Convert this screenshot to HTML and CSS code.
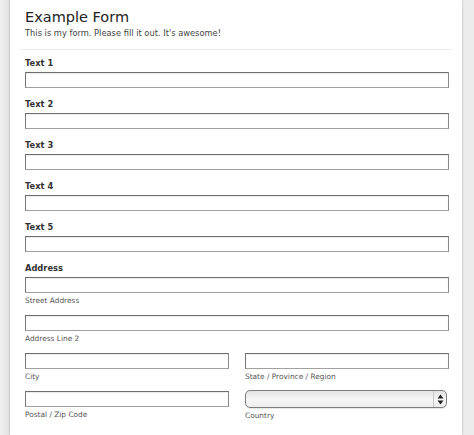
FILE: index.html
```html
<!DOCTYPE html>
<html lang="en">
<head>
<meta charset="utf-8">
<title>Example Form</title>
<link rel="stylesheet" href="styles.css">
</head>
<body>
<div class="page">
  <header class="form-header">
    <h1 class="form-title">Example Form</h1>
    <p class="form-desc">This is my form. Please fill it out. It's awesome!</p>
  </header>
  <form class="form-body">
    <div class="field">
      <label class="field-label">Text 1</label>
      <input class="text-input" type="text">
    </div>
    <div class="field">
      <label class="field-label">Text 2</label>
      <input class="text-input" type="text">
    </div>
    <div class="field">
      <label class="field-label">Text 3</label>
      <input class="text-input" type="text">
    </div>
    <div class="field">
      <label class="field-label">Text 4</label>
      <input class="text-input" type="text">
    </div>
    <div class="field">
      <label class="field-label">Text 5</label>
      <input class="text-input" type="text">
    </div>
    <div class="field address">
      <label class="field-label">Address</label>
      <div class="sub">
        <input class="text-input" type="text">
        <span class="sub-label">Street Address</span>
      </div>
      <div class="sub">
        <input class="text-input" type="text">
        <span class="sub-label">Address Line 2</span>
      </div>
      <div class="sub-row">
        <div class="sub">
          <input class="text-input" type="text">
          <span class="sub-label">City</span>
        </div>
        <div class="sub">
          <input class="text-input" type="text">
          <span class="sub-label">State / Province / Region</span>
        </div>
      </div>
      <div class="sub-row last">
        <div class="sub">
          <input class="text-input" type="text">
          <span class="sub-label">Postal / Zip Code</span>
        </div>
        <div class="sub">
          <div class="select-box">
            <span class="select-value"></span>
            <span class="select-arrows">
              <svg width="7" height="11" viewBox="0 0 7 11"><path d="M3.5 0.5 L6.5 4.5 L0.5 4.5 Z" fill="#222"/><path d="M3.5 10.5 L6.5 6.5 L0.5 6.5 Z" fill="#222"/></svg>
            </span>
          </div>
          <span class="sub-label">Country</span>
        </div>
      </div>
    </div>
  </form>
</div>
</body>
</html>
```

FILE: styles.css
```css
html, body {
  margin: 0;
  padding: 0;
  height: 100%;
}
body {
  background: linear-gradient(to right, #f0f0f0 0, #e4e4e4 9px, #ececec 100%);
  font-family: "DejaVu Sans", Verdana, sans-serif;
  color: #222;
}
.page {
  margin-left: 10px;
  width: 452px;
  height: 100%;
  background: #fff;
  box-shadow: 0 0 2px rgba(0, 0, 0, 0.3);
  box-sizing: border-box;
  overflow: hidden;
}
.form-header {
  margin: 0 10px;
  padding: 8px 0 10px 5px;
  border-bottom: 1px solid #ececec;
}
.form-title {
  margin: 0;
  font-size: 14.5px;
  line-height: 18px;
  font-weight: normal;
  color: #222;
}
.form-desc {
  margin: 2px 0 0;
  font-size: 8.3px;
  line-height: 11px;
  color: #444;
}
.form-body {
  margin: 0;
  padding: 8px 13px 0 15px;
}
.field {
  display: flex;
  flex-direction: column;
  margin-bottom: 11px;
}
.field.address {
  margin-bottom: 0;
}
.field-label {
  font-size: 8.3px;
  line-height: 11px;
  font-weight: bold;
  color: #333;
  margin-bottom: 3px;
}
.text-input {
  display: block;
  box-sizing: border-box;
  width: 100%;
  height: 16px;
  margin: 0;
  padding: 0;
  border: 1px solid #8a8a8a;
  border-top-color: #6e6e6e;
  border-left-color: #777;
  border-bottom-color: #a0a0a0;
  background: #fff;
  box-shadow: inset 0 1px 1px rgba(0, 0, 0, 0.08);
  border-radius: 0;
  outline: none;
}
.sub {
  display: flex;
  flex-direction: column;
  margin-bottom: 9px;
}
.sub-row.last .sub {
  margin-bottom: 0;
}
.sub-label {
  margin-top: 3px;
  font-size: 7.4px;
  line-height: 10px;
  color: #555;
}
.sub-row {
  display: grid;
  grid-template-columns: 1fr 1fr;
  column-gap: 16px;
}
.select-box {
  box-sizing: border-box;
  display: flex;
  align-items: stretch;
  width: 202px;
  height: 18px;
  margin-top: -1px;
  border: 1px solid #7d7d7d;
  border-radius: 5px;
  background: linear-gradient(#e2e2e2, #f6f6f6 55%, #ededed);
  box-shadow: 0 1px 1px rgba(0, 0, 0, 0.1);
}
.select-value {
  flex: 1;
}
.select-arrows {
  width: 12px;
  border-left: 1px solid #c8c8c8;
  display: flex;
  align-items: center;
  justify-content: center;
}
.select-arrows svg {
  display: block;
}
```
